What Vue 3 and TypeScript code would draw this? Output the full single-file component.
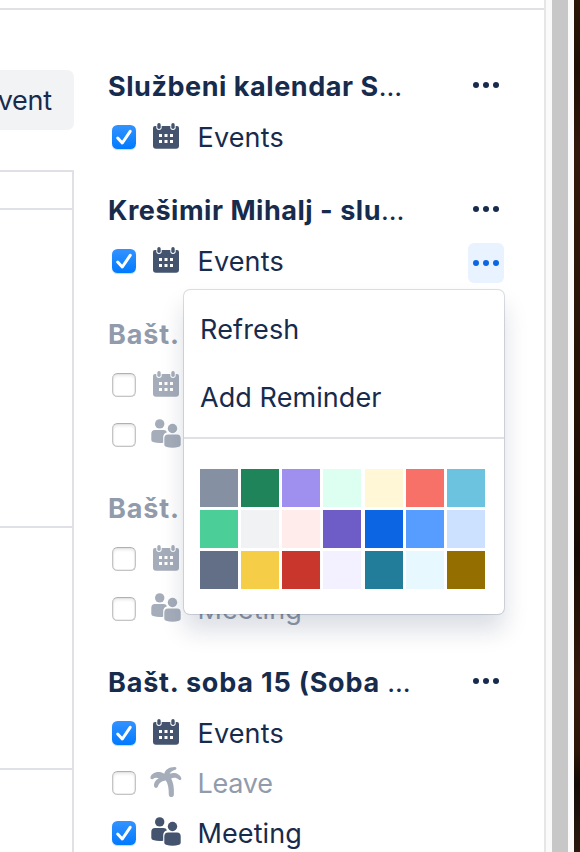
<script setup lang="ts">
type Kind = 'events' | 'meeting' | 'leave'

interface Row {
  kind: Kind
  label?: string
  checked: boolean
  menuOpen?: boolean
}

interface Group {
  title: string
  cls: string
  cut: boolean
  dimmed: boolean
  rows: Row[]
}

const groups: Group[] = [
  {
    title: 'Službeni kalendar S',
    cls: 't-office',
    cut: true,
    dimmed: false,
    rows: [{ kind: 'events', label: 'Events', checked: true }],
  },
  {
    title: 'Krešimir Mihalj - slu',
    cls: 't-person',
    cut: true,
    dimmed: false,
    rows: [{ kind: 'events', label: 'Events', checked: true, menuOpen: true }],
  },
  {
    title: 'Bašt.',
    cls: 't-short',
    cut: false,
    dimmed: true,
    rows: [
      { kind: 'events', checked: false },
      { kind: 'meeting', checked: false },
    ],
  },
  {
    title: 'Bašt.',
    cls: 't-short',
    cut: false,
    dimmed: true,
    rows: [
      { kind: 'events', checked: false },
      { kind: 'meeting', label: 'Meeting', checked: false },
    ],
  },
  {
    title: 'Bašt. soba 15 (Soba ',
    cls: 't-room',
    cut: true,
    dimmed: false,
    rows: [
      { kind: 'events', label: 'Events', checked: true },
      { kind: 'leave', label: 'Leave', checked: false },
      { kind: 'meeting', label: 'Meeting', checked: true },
    ],
  },
]

const swatches: string[] = [
  '#8590a2', '#1f845a', '#9f8fef', '#dcfff1', '#fff7d6', '#f87168', '#6cc3e0',
  '#4bce97', '#f1f2f4', '#ffeceb', '#6e5dc6', '#0c66e4', '#579dff', '#cce0ff',
  '#626f86', '#f5cd47', '#c9372c', '#f3f0ff', '#227d9b', '#e7f9ff', '#946f00',
]
</script>

<template>
  <div class="screen">
    <div class="page">
      <div class="topbar"></div>
      <div class="content">
        <div class="calendar">
          <button class="add-event">vent</button>
          <div class="cells">
            <div class="cell head"></div>
            <div class="cell tall"></div>
            <div class="cell mid"></div>
            <div class="cell last"></div>
          </div>
        </div>

        <aside class="sidebar">
          <section v-for="(g, gi) in groups" :key="gi" class="group" :class="{ dimmed: g.dimmed }">
            <header class="group-head">
              <h3 class="title" :class="g.cls">{{ g.title }}<span v-if="g.cut" class="cut">…</span></h3>
              <button class="more">
                <svg width="28" height="8" viewBox="0 0 28 8">
                  <circle cx="4" cy="4" r="3" /><circle cx="14" cy="4" r="3" /><circle cx="24" cy="4" r="3" />
                </svg>
              </button>
            </header>

            <div v-for="(r, ri) in g.rows" :key="ri" class="row" :class="{ off: !r.checked }">
              <span class="check" :class="{ on: r.checked }">
                <svg v-if="r.checked" width="24" height="24" viewBox="0 0 24 24">
                  <path d="M5.7 13 L10.3 18 L18.2 6.3" />
                </svg>
              </span>

              <svg v-if="r.kind === 'events'" class="icon" width="32" height="32" viewBox="0 0 32 32">
                <path
                  fill-rule="evenodd"
                  d="M5 5H6.3V6.300A2.700 2.700 0 0 0 11.700 6.300V5H20.300V6.300A2.700 2.700 0 0 0 25.700 6.300V5H27A2 2 0 0 1 29 7V24.700A3 3 0 0 1 26 27.700H6A3 3 0 0 1 3 24.700V7A2 2 0 0 1 5 5Z
                     M9 13V16H12V13Z M14.500 13V16H17.500V13Z M20 13V16H23V13Z
                     M9 19V22H12V19Z M14.500 19V22H17.500V19Z M20 19V22H23V19Z"
                />
                <rect x="7.300" y="2" width="3.400" height="6" rx="1.700" />
                <rect x="21.300" y="2" width="3.400" height="6" rx="1.700" />
              </svg>

              <svg v-else-if="r.kind === 'meeting'" class="icon" width="32" height="32" viewBox="0 0 32 32">
                <circle cx="9.700" cy="4.900" r="4.700" />
                <path d="M5 11H13.500Q16 11 17 13.200Q13.300 14.500 13.200 18V23.800Q8 24.400 3 23Q1.300 22.500 1.300 20.700V15Q1.300 11 5 11Z" />
                <circle cx="22.500" cy="9.500" r="4.700" />
                <path d="M18.200 15.500H27Q30.700 15.500 30.700 19.500V25.500Q30.700 27.300 29 27.800Q22.500 29.700 16 27.800Q14.300 27.300 14.300 25.500V19.500Q14.300 15.500 18.200 15.500Z" />
              </svg>

              <svg v-else class="icon" width="32" height="32" viewBox="0 0 32 32">
                <path
                  d="M14.300 6.800C15.200 2.500 19.500 -0.300 25.200 0C26.800 0.200 26.900 2.100 25.500 2.700C22.300 3.700 20.100 5.200 19.600 6.700C24.600 4.800 30 6.800 31.300 11.200C31.700 13 29.800 13.600 28.700 12.500C26.600 10.700 23.600 10.300 21.200 11.500C23.500 15.700 24.200 21.300 23.900 27.700C23.700 30.900 18.900 30.900 18.800 27.700C18.900 21.700 18 17 15.900 13.600C12.200 13.800 9 16 7.900 19.500C7.300 21.400 4.700 21.400 4.200 19.500C3.500 16.200 5.500 13.200 8.800 11.300C6.800 10.200 4.600 10.500 3 11.900C1.500 12.900 0 11.700 0.500 10C2.300 5.300 9.300 3.500 14.300 6.800Z"
                />
              </svg>

              <span v-if="r.label" class="label" :class="r.kind">{{ r.label }}</span>
              <button v-if="r.menuOpen" class="more active">
                <svg width="28" height="8" viewBox="0 0 28 8">
                  <circle cx="4" cy="4" r="3" /><circle cx="14" cy="4" r="3" /><circle cx="24" cy="4" r="3" />
                </svg>
              </button>
            </div>
          </section>
        </aside>
      </div>
    </div>

    <div class="scroll-track"><div class="thumb"></div></div>
    <div class="backdrop"></div>

    <div class="menu">
      <div class="items">
        <div class="item refresh">Refresh</div>
        <div class="item reminder">Add Reminder</div>
      </div>
      <div class="swatches">
        <span v-for="c in swatches" :key="c" class="swatch" :style="{ background: c }"></span>
      </div>
    </div>
  </div>
</template>

<style>
body {
  background: #fff;
}
</style>

<style scoped>
.screen {
  position: relative;
  display: flex;
  width: 580px;
  height: 852px;
  overflow: hidden;
  background: #fff;
  color: #172b4d;
  font-family: Inter, "Liberation Sans", sans-serif;
  font-size: 27px;
}
.screen * {
  box-sizing: border-box;
}
button {
  border: 0;
  padding: 0;
  margin: 0;
  background: none;
  font: inherit;
  color: inherit;
}
.page {
  width: 546px;
  border-right: 2px solid #e6e6e7;
  overflow: hidden;
}
.topbar {
  height: 10px;
  border-bottom: 2px solid #e0e1e6;
}
.content {
  display: flex;
  height: 842px;
}
.calendar {
  width: 74px;
  padding-top: 60px;
  flex: none;
}
.add-event {
  display: flex;
  align-items: center;
  justify-content: flex-end;
  width: 74px;
  height: 60px;
  padding: 0 22px 0 0;
  border-radius: 0 7px 7px 0;
  background: #f2f3f5;
  letter-spacing: -0.2px;
}
.cells {
  margin-top: 40px;
  border-top: 2px solid #e0e1e6;
  border-right: 2px solid #e0e1e6;
}
.cell {
  border-bottom: 2px solid #e0e1e6;
}
.head { height: 38px; }
.tall { height: 318px; }
.mid { height: 242px; }
.last { height: 90px; }

.sidebar {
  flex: 1;
  padding: 50px 40px 0 34px;
}
.group {
  margin-bottom: 22px;
}
.group-head {
  display: flex;
  align-items: center;
  justify-content: space-between;
  height: 52px;
}
.title {
  margin: 0;
  padding-top: 2px;
  font-size: 27px;
  font-weight: 700;
  line-height: 52px;
  white-space: pre;
}
.t-office { letter-spacing: 0.55px; }
.t-person { letter-spacing: 0.53px; }
.t-short { letter-spacing: 0.85px; }
.t-room { letter-spacing: 0.8px; }
.cut {
  font-weight: 400;
  letter-spacing: 0;
}
.dimmed .title {
  color: #919bab;
}
.more {
  display: flex;
  align-items: center;
  justify-content: center;
  flex: none;
  width: 36px;
  height: 40px;
  border-radius: 6px;
}
.group-head .more {
  margin-top: -2px;
}
.more svg {
  fill: #172b4d;
}
.more.active {
  margin: 4px 0 0 auto;
  background: #e9f2ff;
}
.more.active svg {
  fill: #0c66e4;
}
.row {
  display: flex;
  align-items: center;
  height: 50px;
  padding-left: 4px;
}
.check {
  flex: none;
  width: 24px;
  height: 24px;
  border: 1px solid #c4c4c4;
  border-top-color: #b0b0b0;
  border-radius: 5.500px;
  background: #fff;
  box-shadow: inset 0 0 0 0.500px #dcdcdc, inset 0 2px 3px rgba(0, 0, 0, 0.09);
}
.check.on {
  border: 0;
  background: linear-gradient(#3393ff, #007aff);
  box-shadow: 0 1px 1px rgba(0, 90, 200, 0.25);
}
.check svg {
  display: block;
  fill: none;
  stroke: #fff;
  stroke-width: 3;
  stroke-linecap: round;
  stroke-linejoin: round;
}
.icon {
  flex: none;
  margin-left: 14px;
  overflow: visible;
  fill: #44546f;
}
.off .icon {
  fill: #a5adba;
}
.label {
  margin-left: 15.500px;
}
.label.events { letter-spacing: 0.15px; }
.label.leave { letter-spacing: -0.25px; }
.label.meeting { letter-spacing: 0.1px; }
.off .label {
  color: #919bab;
}

.scroll-track {
  width: 28px;
  padding: 0 6px;
  background: #fafafa;
}
.thumb {
  width: 16px;
  height: 100%;
  background: #c7c7c7;
}
.backdrop {
  flex: 1;
  background: linear-gradient(#2b1608, #1d0f05 8%, #33190b 18%, #241207 45%, #160b04 65%, #35190d 80%, #2d1407 88%, #120b05 92%, #2a1a10);
}

.menu {
  position: absolute;
  left: 184px;
  top: 290px;
  width: 320px;
  height: 324px;
  border-radius: 6px;
  background: #fff;
  box-shadow: 0 0 0 1px rgba(9, 30, 66, 0.12), 0 0 2px rgba(9, 30, 66, 0.1), 0 16px 24px rgba(9, 30, 66, 0.15);
}
.items {
  height: 149px;
  padding-top: 6px;
  border-bottom: 2px solid #dfe1e6;
}
.item {
  height: 68px;
  padding-left: 16px;
  line-height: 68px;
}
.refresh { letter-spacing: 0.15px; }
.reminder { letter-spacing: 0.08px; }
.swatches {
  display: grid;
  grid-template-columns: 38px 38px 38px 39px 38px 38px 38px;
  gap: 3px;
  padding: 30px 16px 0;
}
.swatch {
  width: 38px;
  height: 38px;
}
</style>
